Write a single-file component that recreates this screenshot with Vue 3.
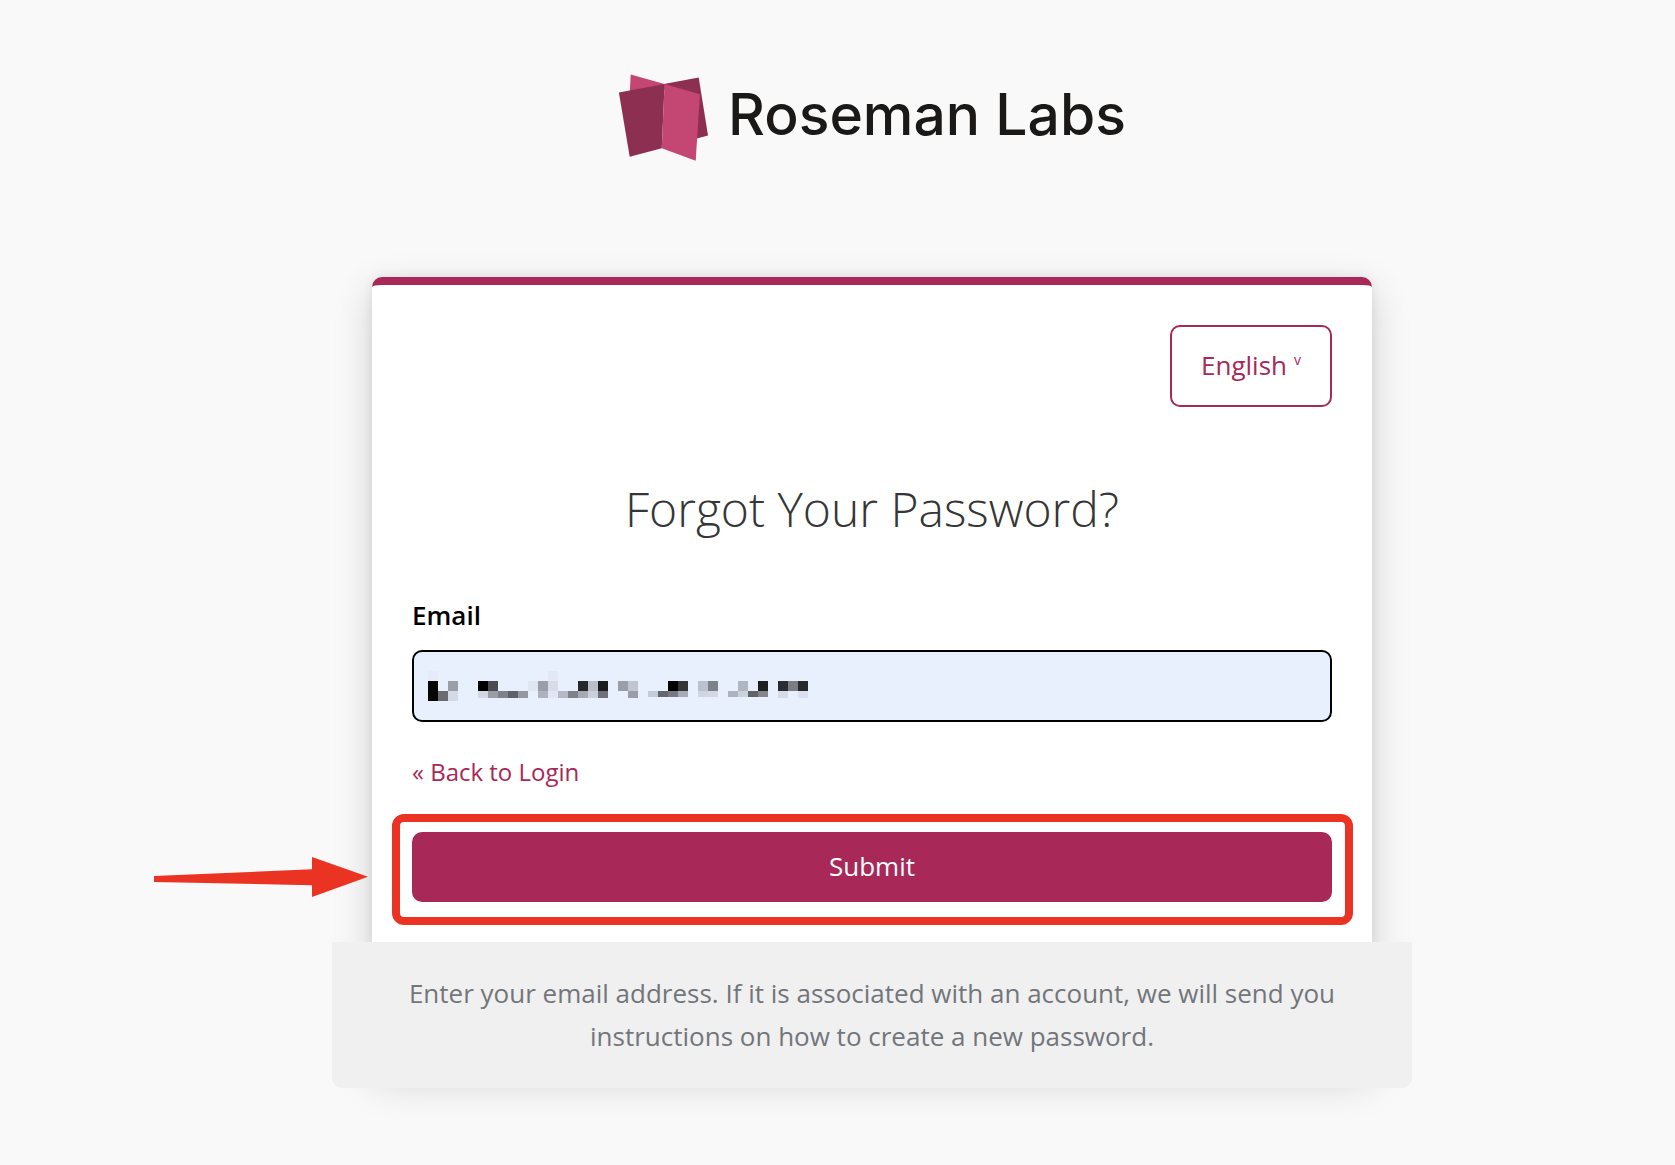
<script setup>
import { ref } from 'vue'

const email = ref('')
const language = ref('en')

// Each run: [column, colour]; one column is 10 units wide.
const mosaic = [
  { y: 0, h: 10, cells: [[0, '#e5ebfa'], [12, '#e2e8f5']] },
  {
    y: 10,
    h: 10,
    cells: [
      [0, '#060606'], [2, '#9b9ea6'], [5, '#000000'], [6, '#4a4c50'], [10, '#e0e6f2'],
      [11, '#9b9ea8'], [12, '#d7dce8'], [15, '#27282c'], [16, '#b9bec9'], [17, '#1b1c1f'],
      [19, '#9b9ea8'], [20, '#c0c5d2'], [24, '#030303'], [25, '#343539'], [27, '#bbc1cf'],
      [28, '#7f8189'], [31, '#b0b6c1'], [33, '#1e1f20'], [35, '#2b2c30'], [36, '#7b7d84'],
      [37, '#28292c']
    ]
  },
  { y: 20, h: 10, cells: [[0, '#060606'], [1, '#6b6c70'], [2, '#d4d9e6']] },
  {
    y: 20,
    h: 7,
    cells: [
      [5, '#d2d7e3'], [6, '#9a9da6'], [7, '#80828a'], [8, '#606166'], [9, '#95989f'],
      [11, '#aeb2be'], [12, '#e0e6f3'], [13, '#b5b9c5'], [14, '#80828b'], [15, '#a7aab3'],
      [16, '#cbd0dd'], [17, '#6f717a'], [20, '#9b9ea8'], [35, '#d6dbe8'], [37, '#dae0ed']
    ]
  },
  {
    y: 20,
    h: 6,
    cells: [
      [22, '#c5cad7'], [23, '#66676c'], [24, '#777983'], [25, '#a8abb4'], [27, '#d0d5e2'],
      [28, '#d3d8e4'], [30, '#aeb2be'], [31, '#ccd1de'], [32, '#626469'], [33, '#84868c']
    ]
  }
]
</script>

<template>
  <div class="page">
    <header class="brand">
      <svg class="brand-mark" viewBox="0 0 90 88" aria-hidden="true">
        <polygon points="12.7,0.4 46.5,10 50,16 11.8,19" fill="#c44672" />
        <polygon points="46,10 80.7,3.6 90,61.6 77,65" fill="#8c2f50" />
        <polygon points="0.9,18.5 46.6,10 43.8,74.2 11.7,82.7" fill="#8c2f50" />
        <polygon points="46.6,10 82,20.2 77.7,86.7 43.8,74.2" fill="#c44672" />
      </svg>
      <span class="brand-name">Roseman Labs</span>
    </header>

    <main class="card">
      <div class="locale">
        <select v-model="language" class="locale-select" aria-label="Language">
          <option value="en">English</option>
        </select>
        <span class="locale-caret" aria-hidden="true">v</span>
      </div>

      <h1 class="title">Forgot Your Password?</h1>

      <form class="form" @submit.prevent>
        <label class="label" for="email">Email</label>
        <div class="field">
          <input id="email" v-model="email" class="input" type="email" autocomplete="email" />
          <svg class="mosaic" viewBox="0 0 380 30" shape-rendering="crispEdges" aria-hidden="true">
            <template v-for="(row, r) in mosaic" :key="r">
              <rect
                v-for="[col, fill] in row.cells"
                :key="col"
                :x="col * 10"
                :y="row.y"
                width="10"
                :height="row.h"
                :fill="fill"
              />
            </template>
          </svg>
        </div>
        <a class="back" href="#login">« Back to Login</a>
        <div class="action">
          <button class="submit" type="submit">Submit</button>
          <span class="highlight" aria-hidden="true"></span>
          <svg class="arrow" viewBox="0 0 214 40" aria-hidden="true">
            <polygon points="0,19 158,12.3 158,0 214,19.7 158,40 158,28.2 0,25" fill="#eb3323" />
          </svg>
        </div>
      </form>

      <p class="info">
        Enter your email address. If it is associated with an account, we will send you
        instructions on how to create a new password.
      </p>
    </main>
  </div>
</template>

<style>
body {
  margin: 0;
  background: #f9f9f9;
}
</style>

<style scoped>
.page {
  box-sizing: border-box;
  min-height: 100vh;
  padding: 74px 0 72px 69px;
  display: flex;
  flex-direction: column;
  align-items: center;
  background: #f9f9f9;
  font-family: "Open Sans", "Noto Sans", sans-serif;
  font-size: 26px;
  color: #000;
}

.brand {
  display: flex;
  align-items: center;
  gap: 20px;
}

.brand-mark {
  width: 90px;
  height: 88px;
}

.brand-name {
  padding-bottom: 6px;
  font-family: Inter, "Liberation Sans", sans-serif;
  font-size: 57px;
  font-weight: 500;
  line-height: 80px;
  color: #1a1917;
}

.card {
  box-sizing: border-box;
  width: 100%;
  max-width: 1000px;
  margin-top: 115px;
  padding: 40px 40px 0;
  border-top: 8px solid #a82857;
  border-radius: 10px;
  background: #fff;
  box-shadow: 0 14px 40px rgba(3, 3, 3, 0.16), 0 0 12px rgba(3, 3, 3, 0.08);
}

.locale {
  display: grid;
  width: 162px;
  margin-left: auto;
  color: #a82857;
}

.locale-select,
.locale-caret {
  grid-area: 1 / 1;
}

.locale-select {
  appearance: none;
  box-sizing: border-box;
  width: 100%;
  height: 82px;
  padding: 0 28px 2px 29px;
  border: 2px solid #a82857;
  border-radius: 10px;
  background: transparent;
  font: inherit;
  color: inherit;
}

.locale-caret {
  justify-self: end;
  align-self: center;
  padding: 0 31px 12px 0;
  font-size: 14px;
  font-weight: 500;
  line-height: 20px;
  pointer-events: none;
}

.title {
  margin: 70px 0 56px;
  font-size: 48px;
  font-weight: 300;
  line-height: 64px;
  text-align: center;
  color: #363636;
}

.form {
  display: flex;
  flex-direction: column;
}

.label {
  align-self: flex-start;
  font-weight: 600;
  line-height: 36px;
}

.field {
  position: relative;
  margin-top: 17px;
}

.input {
  display: block;
  box-sizing: border-box;
  width: 100%;
  height: 72px;
  padding: 0 14px;
  border: 2px solid #000;
  border-radius: 10px;
  background: #e8effd;
  font: inherit;
}

.mosaic {
  position: absolute;
  top: 21px;
  left: 16px;
  width: 380px;
  height: 30px;
  pointer-events: none;
}

.back {
  align-self: flex-start;
  margin: 32px 0 42px;
  font-size: 24px;
  line-height: 36px;
  color: #a82857;
  text-decoration: none;
}

.action {
  position: relative;
}

.submit {
  display: block;
  width: 100%;
  height: 70px;
  padding: 0 0 2px;
  border: 0;
  border-radius: 10px;
  background: #a82857;
  font: inherit;
  color: #fff;
}

.highlight {
  position: absolute;
  inset: -18px -21px -23px -20px;
  border: 8px solid #eb3323;
  border-radius: 12px;
  pointer-events: none;
}

.arrow {
  position: absolute;
  top: 25px;
  left: -258px;
  width: 214px;
  height: 40px;
}

.info {
  margin: 40px -80px -20px;
  padding: 30px 60px;
  border-radius: 0 0 10px 10px;
  background: #f0f0f0;
  line-height: 43px;
  text-align: center;
  color: #72767b;
}
</style>
